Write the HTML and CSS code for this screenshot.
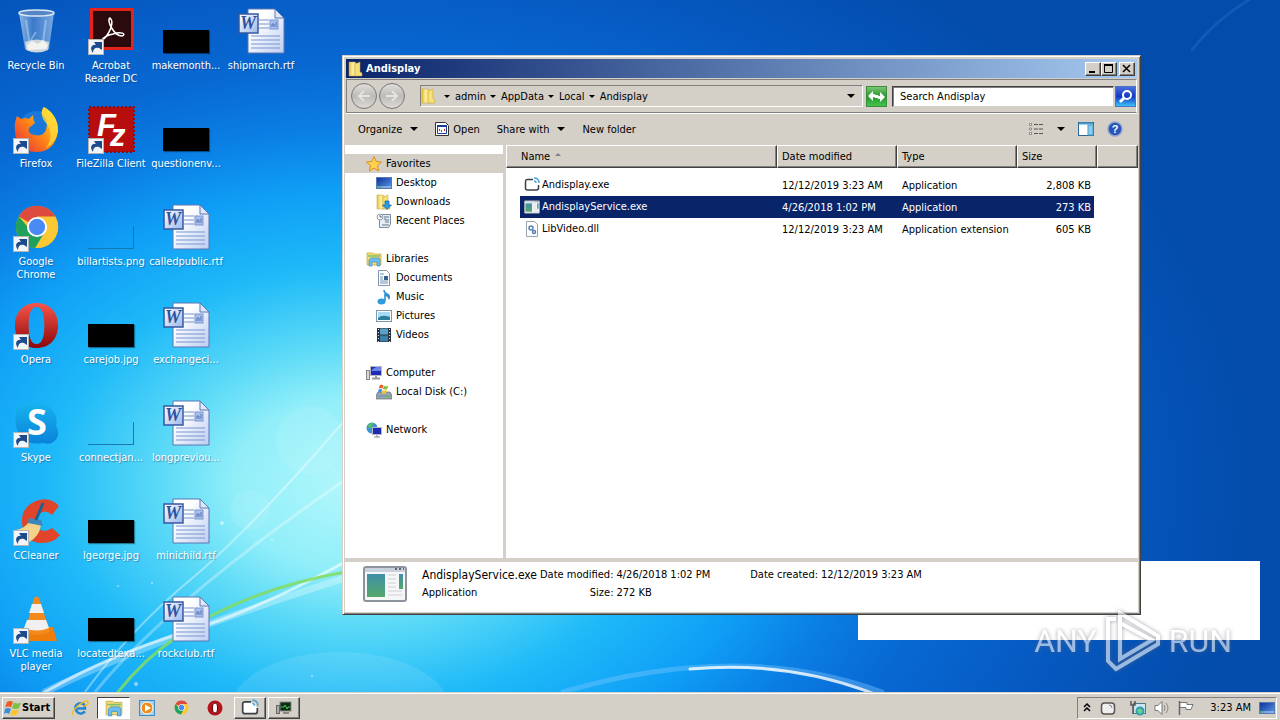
FILE: index.html
```html
<!DOCTYPE html>
<html lang="en">
<head>
    <meta charset="UTF-8">
    <meta name="viewport" content="width=device-width, initial-scale=1.0">
    <title>Andisplay</title>
    <link rel="stylesheet" href="styles.css">
</head>
<body>
    <!-- shared icons -->
    <svg class="sprite" width="0" height="0" aria-hidden="true">
        <defs>
            <linearGradient id="g-red" x1="0" y1="0" x2="0" y2="1">
                <stop offset="0" stop-color="#f7564a"/><stop offset="1" stop-color="#8e0508"/>
            </linearGradient>
            <linearGradient id="g-paper" x1="0" y1="0" x2="1" y2="1">
                <stop offset="0.3" stop-color="#ffffff"/><stop offset="1" stop-color="#bccdf2"/>
            </linearGradient>
            <linearGradient id="g-word" x1="0" y1="0" x2="1" y2="1">
                <stop offset="0" stop-color="#ffffff"/><stop offset="1" stop-color="#9db8ea"/>
            </linearGradient>
            <linearGradient id="g-fox" x1="0" y1="1" x2="1" y2="0">
                <stop offset="0" stop-color="#e8223c"/><stop offset="0.5" stop-color="#ff8a16"/><stop offset="1" stop-color="#fff23a"/>
            </linearGradient>
            <linearGradient id="g-folder" x1="0" y1="0" x2="1" y2="0">
                <stop offset="0" stop-color="#e9c23c"/><stop offset="0.5" stop-color="#fdf3a4"/><stop offset="1" stop-color="#e3c04a"/>
            </linearGradient>
            <linearGradient id="g-screen" x1="0" y1="0" x2="1" y2="1">
                <stop offset="0" stop-color="#0a2f96"/><stop offset="1" stop-color="#5a9ae8"/>
            </linearGradient>
            <linearGradient id="g-green" x1="0" y1="0" x2="0" y2="1">
                <stop offset="0" stop-color="#3f8fa8"/><stop offset="1" stop-color="#54a868"/>
            </linearGradient>
            <linearGradient id="g-glass" x1="0" y1="0" x2="1" y2="0">
                <stop offset="0" stop-color="#b9d4f0"/><stop offset="0.4" stop-color="#4d84cc"/><stop offset="1" stop-color="#9fc3ea"/>
            </linearGradient>
            <linearGradient id="g-skype" x1="0" y1="0" x2="0" y2="1">
                <stop offset="0" stop-color="#17b4f0"/><stop offset="1" stop-color="#0a82d8"/>
            </linearGradient>
        </defs>
        <symbol id="shortcut" viewBox="0 0 16 16">
            <rect x="0.5" y="0.5" width="15" height="15" fill="#f1f4f8" stroke="#b5b5b5"/>
            <path d="M5 14C1 9 4 5 8 6L6 3h8v8l-3-2C7 8 5 10 5 14z" fill="#1c4a8c"/>
        </symbol>
        <symbol id="rtf" viewBox="0 0 48 48">
            <path d="M11 1h27l9 9v35H11z" fill="url(#g-paper)" stroke="#5b76b4"/>
            <path d="M38 1v9h9z" fill="#dfe8fa" stroke="#5b76b4"/>
            <path d="M22 12h10M22 16h10M22 20h10M14 28h29M14 32h29M14 36h29M14 40h29" stroke="#7b95cf"/>
            <rect x="33" y="12" width="8" height="9" fill="#a9c0ea" stroke="#7b95cf"/>
            <path d="M35 19v-3h2v3M39 19v-5" fill="none" stroke="#5272b8"/>
            <rect x="2" y="6" width="19" height="19" fill="url(#g-word)" stroke="#3558a4" stroke-width="1.5"/>
        </symbol>
        <symbol id="chrome" viewBox="0 0 48 48">
            <circle cx="24" cy="24" r="22" fill="#fcc934"/>
            <path d="M24 24L4.900 13A22 22 0 0 1 43.100 13z" fill="#dd4b3e"/>
            <path d="M24 24h-9.500L4.900 13A22 22 0 0 0 22 46l9-15z" fill="#1fa15d"/>
            <path d="M24 13h19.100A22 22 0 0 1 24 46l9.500-17z" fill="#fcc934"/>
            <circle cx="24" cy="24" r="10.500" fill="#fff"/>
            <circle cx="24" cy="24" r="8.500" fill="#4a8af4"/>
        </symbol>
        <symbol id="opera" viewBox="0 0 48 48">
            <path fill="url(#g-red)" fill-rule="evenodd" d="M24 1C37 1 46 10 46 24S37 47 24 47 2 38 2 24 11 1 24 1zM24 5C18 5 16 13 16 24S18 43 24 43 32 35 32 24 30 5 24 5z"/>
        </symbol>
        <symbol id="folder" viewBox="0 0 16 16">
            <path d="M1 1h6l2 2v12H1z" fill="url(#g-folder)" stroke="#c59c2c" stroke-width="0.5"/>
            <path d="M7 3l5-2v10l2 1v3H7z" fill="#f6e07a" stroke="#c59c2c" stroke-width="0.5"/>
        </symbol>
        <symbol id="library" viewBox="0 0 16 16">
            <path d="M1 2h6l1 1h7v11H1z" fill="#f4dc74" stroke="#c8a236" stroke-width="0.7"/>
            <path d="M2 5h12" stroke="#7ec46a" stroke-width="1.500"/>
            <path d="M3 15V9l2-2h8l1 2v6h-3v-4H6v4z" fill="#6dbef0" stroke="#3b8fcc" stroke-width="0.7"/>
        </symbol>
        <symbol id="screen" viewBox="0 0 16 16">
            <rect x="0.5" y="2.500" width="15" height="11" fill="url(#g-screen)" stroke="#5a78b8"/>
            <path d="M1 12h14" stroke="#bcd7f5"/><path d="M1 12h4" stroke="#42b05a"/>
        </symbol>
        <symbol id="castbox" viewBox="0 0 16 16">
            <path d="M9 2.500H3.500a2 2 0 0 0-2 2V11a2 2 0 0 0 2 2h9a2 2 0 0 0 2-2V8" fill="#fff" stroke="#3b3f46" stroke-width="1.500"/>
            <path d="M8 4h5v5" fill="#fff"/>
            <path d="M10 1c3 0 5 2 5 5M10 4c1 0 2 1 2 2" fill="none" stroke="#4ba6dc" stroke-width="1.500"/>
        </symbol>
        <symbol id="appwin" viewBox="0 0 44 36">
            <rect x="1" y="1" width="42" height="34" rx="2" fill="#f5f6f8" stroke="#8d949e" stroke-width="2"/>
            <path d="M2 4h40" stroke="#c9d1dc" stroke-width="4"/>
            <path d="M32 3h2M36 3h2M40 3h1" stroke="#5d6672" stroke-width="2"/>
            <rect x="4" y="8" width="18" height="23" fill="url(#g-green)"/>
            <path d="M25 9h8M25 13h8M25 17h8M25 21h8M25 25h14M25 29h14" stroke="#d0d0d0"/>
            <rect x="36" y="8" width="4" height="15" fill="url(#g-green)"/>
        </symbol>
        <symbol id="start-flag" viewBox="0 0 18 16">
            <path d="M3 2q3-2 6 0L7 7.500q-3-2-6 0z" fill="#ee5a24"/>
            <path d="M10 2.500q3 2 7 0L15 8q-3 2-7 0z" fill="#7cc142"/>
            <path d="M1 9q3-2 6 0l-2 5q-3-2-5 0z" fill="#3a8ee0"/>
            <path d="M8 9.500q3 2 7 0l-2 5q-3 2-7 0z" fill="#fbc52c"/>
        </symbol>
    </svg>

    <main class="desktop">
        <svg class="streaks" viewBox="0 0 1280 692" preserveAspectRatio="none" aria-hidden="true">
            <g fill="none" stroke-linecap="round">
                <path d="M45 692Q150 640 345 578" stroke="#fff" stroke-opacity="0.3" stroke-width="7"/>
                <path d="M45 692Q110 655 185 632T345 562" stroke="#fff" stroke-opacity="0.6" stroke-width="3"/>
                <path d="M85 692Q130 630 190 580T345 420" stroke="#fff" stroke-opacity="0.4" stroke-width="2"/>
                <path d="M95 692Q170 600 345 480" stroke="#fff" stroke-opacity="0.3" stroke-width="3"/>
                <path d="M118 692Q190 600 345 572" stroke="#83dc62" stroke-opacity="0.85" stroke-width="3"/>
                <path d="M563 692Q740 640 882 692" stroke="#7fc8ff" stroke-opacity="0.4" stroke-width="5"/>
                <path d="M690 669Q790 660 880 696" stroke="#fff" stroke-opacity="0.8" stroke-width="3"/>
                <path d="M1192 50Q1215 20 1249 0" stroke="#4f9be0" stroke-opacity="0.2" stroke-width="3"/>
            </g>
            <circle cx="310" cy="440" r="34" fill="#fff" fill-opacity="0.08"/>
            <circle cx="250" cy="510" r="20" fill="#fff" fill-opacity="0.08"/>
            <ellipse cx="340" cy="710" rx="110" ry="58" fill="#fff" fill-opacity="0.1"/>
            <g fill="#fff" fill-opacity="0.5">
                <circle cx="222" cy="523" r="2"/><circle cx="118" cy="586" r="1"/><circle cx="136" cy="684" r="2"/>
                <circle cx="272" cy="540" r="1"/><circle cx="312" cy="676" r="1"/><circle cx="152" cy="583" r="1"/>
            </g>
        </svg>

        <nav class="icons" aria-label="Desktop">
            <a href="#" class="shortcut">
                <svg viewBox="0 0 48 48">
                    <path d="M7 5h35l-5 36q-12 6-24 0z" fill="url(#g-glass)" fill-opacity="0.75"/>
                    <path d="M13 34q11-5 24 0l-1 8q-11 5-22 0z" fill="#ccd5de"/>
                    <path d="M15 37l5-4 6 3 5-4 5 5-2 4-18 1z" fill="#f3f3ef"/>
                    <path d="M14 12l4 26M34 12l-3 22M24 24l-5 8" stroke="#d8ecff" stroke-opacity="0.4" stroke-width="2"/>
                    <ellipse cx="24.500" cy="5" rx="17.500" ry="3" fill="#5586c4" stroke="#dbe7f3" stroke-width="1.500"/>
                </svg>
                <span>Recycle Bin</span>
            </a>
            <a href="#" class="shortcut">
                <svg viewBox="0 0 48 48">
                    <rect x="3" y="0" width="44" height="42" fill="#e5231b"/>
                    <rect x="6" y="3" width="38" height="36" fill="#2a0a0c"/>
                    <path d="M14 33C22 28 28 14 23 10c-4 2 4 18 12 18 5-2-1-5-9-2-6 1-10 4-12 7z" fill="none" stroke="#fff" stroke-width="1.500"/>
                    <use href="#shortcut" x="1" y="31" width="16" height="16"/>
                </svg>
                <span>Acrobat Reader DC</span>
            </a>
            <a href="#" class="shortcut"><i class="thumb dark"></i><span>makemonth...</span></a>
            <a href="#" class="shortcut"><svg><use href="#rtf"/><text x="11" y="21" text-anchor="middle" class="word-w">W</text></svg><span>shipmarch.rtf</span></a>

            <a href="#" class="shortcut">
                <svg viewBox="0 0 48 48">
                    <circle cx="24" cy="22" r="17" fill="#1878dc"/>
                    <path d="M5 10l4 3q4-2 8 0l4-4q0 5 2 8l-6 5q-2 6 6 7 8 2 11-5Q37 13 30 9q-1-5 2-8Q46 9 46 25 43 46 24 46 4 45 3 26 2 16 5 10z" fill="url(#g-fox)"/>
                    <path d="M30 9q-1-5 2-8Q46 9 46 25q-2 12-12 17 9-14 0-25-4-4-4-8z" fill="#ffe03a" fill-opacity="0.7"/>
                    <use href="#shortcut" x="1" y="32" width="16" height="16"/>
                </svg>
                <span>Firefox</span>
            </a>
            <a href="#" class="shortcut">
                <svg viewBox="0 0 48 48">
                    <rect x="2" y="1" width="45" height="45" fill="#b80d0d" stroke="#8a0d12" stroke-width="2" stroke-dasharray="2 2"/>
                    <text x="10" y="30" class="fz">F<tspan dy="10" dx="-6">z</tspan></text>
                    <use href="#shortcut" x="1" y="32" width="16" height="16"/>
                </svg>
                <span>FileZilla Client</span>
            </a>
            <a href="#" class="shortcut"><i class="thumb dark"></i><span>questionenv...</span></a>

            <a href="#" class="shortcut">
                <svg viewBox="0 0 48 48">
                    <use href="#chrome" x="2" y="0" width="46" height="46"/>
                    <use href="#shortcut" x="1" y="32" width="16" height="16"/>
                </svg>
                <span>Google Chrome</span>
            </a>
            <a href="#" class="shortcut"><i class="thumb clear"></i><span>billartists.png</span></a>
            <a href="#" class="shortcut"><svg><use href="#rtf"/><text x="11" y="21" text-anchor="middle" class="word-w">W</text></svg><span>calledpublic.rtf</span></a>

            <a href="#" class="shortcut">
                <svg viewBox="0 0 48 48">
                    <use href="#opera" x="1" y="0" width="47" height="47"/>
                    <use href="#shortcut" x="1" y="32" width="16" height="16"/>
                </svg>
                <span>Opera</span>
            </a>
            <a href="#" class="shortcut"><i class="thumb dark"></i><span>carejob.jpg</span></a>
            <a href="#" class="shortcut"><svg><use href="#rtf"/><text x="11" y="21" text-anchor="middle" class="word-w">W</text></svg><span>exchangeci...</span></a>

            <a href="#" class="shortcut">
                <svg viewBox="0 0 48 48">
                    <path d="M4 13C4 5 10 1 17 2q18-2 25 10 4 7 2 14 4 6 1 12-5 8-14 5Q14 46 7 34 2 26 4 13z" fill="url(#g-skype)"/>
                    <text x="25" y="35" text-anchor="middle" class="skype-s">S</text>
                    <use href="#shortcut" x="1" y="32" width="16" height="16"/>
                </svg>
                <span>Skype</span>
            </a>
            <a href="#" class="shortcut"><i class="thumb clear"></i><span>connectjan...</span></a>
            <a href="#" class="shortcut"><svg><use href="#rtf"/><text x="11" y="21" text-anchor="middle" class="word-w">W</text></svg><span>longpreviou...</span></a>

            <a href="#" class="shortcut">
                <svg viewBox="0 0 48 48">
                    <path d="M47 8Q38-2 24 3 9 9 10 25q2 20 20 20 12 0 18-8l-8-7q-8 6-14 0-5-7 0-13 7-7 14 0z" fill="#e0452c"/>
                    <path d="M4 32q10-2 14-10l11 5q-2 12-12 17z" fill="#f5d28a"/>
                    <path d="M17 20l12 2 2 6-15-3z" fill="#3c86bc"/>
                    <path d="M31 5l-7 17" stroke="#1b6296" stroke-width="3"/>
                    <use href="#shortcut" x="1" y="32" width="16" height="16"/>
                </svg>
                <span>CCleaner</span>
            </a>
            <a href="#" class="shortcut"><i class="thumb dark"></i><span>lgeorge.jpg</span></a>
            <a href="#" class="shortcut"><svg><use href="#rtf"/><text x="11" y="21" text-anchor="middle" class="word-w">W</text></svg><span>minichild.rtf</span></a>

            <a href="#" class="shortcut">
                <svg viewBox="0 0 48 48">
                    <path d="M13 31h28l4 14H9z" fill="#ef7d0c"/>
                    <path d="M22 2q3-3 5 0l11 34q-13 6-25 0z" fill="#f58a1c"/>
                    <path d="M20 8h9l3 9H17zM15 24h19l3 8q-12 5-25 0z" fill="#f0f0f0"/>
                    <use href="#shortcut" x="1" y="32" width="16" height="16"/>
                </svg>
                <span>VLC media player</span>
            </a>
            <a href="#" class="shortcut"><i class="thumb dark"></i><span>locatedtexa...</span></a>
            <a href="#" class="shortcut"><svg><use href="#rtf"/><text x="11" y="21" text-anchor="middle" class="word-w">W</text></svg><span>rockclub.rtf</span></a>
        </nav>

        <div class="popup"></div>

        <section class="window" aria-label="Andisplay">
            <header class="title-bar">
                <svg width="16" height="16"><use href="#folder"/></svg>
                <h1>Andisplay</h1>
                <button type="button" aria-label="Minimize"><svg width="12" height="10"><path d="M2 8h6" stroke="#000" stroke-width="2"/></svg></button>
                <button type="button" aria-label="Maximize"><svg width="12" height="10"><path d="M1.500 1v7.500h8V1M1 1h9" fill="none" stroke="#000"/><path d="M1 1h9" stroke="#000" stroke-width="2"/></svg></button>
                <button type="button" aria-label="Close" class="close"><svg width="12" height="10"><path d="M2 1l7 7M9 1L2 8" stroke="#000" stroke-width="1.500"/></svg></button>
            </header>

            <div class="nav-bar">
                <button type="button" class="round" aria-label="Back"><svg width="16" height="16"><path d="M14 8H3M8 3L3 8l5 5" fill="none" stroke="#e6e4e0" stroke-width="2"/></svg></button>
                <button type="button" class="round" aria-label="Forward"><svg width="16" height="16"><path d="M2 8h11M8 3l5 5-5 5" fill="none" stroke="#e6e4e0" stroke-width="2"/></svg></button>
                <div class="address">
                    <svg width="16" height="16"><use href="#folder"/></svg>
                    <button type="button"><i class="arrow"></i>admin</button>
                    <button type="button"><i class="arrow"></i>AppData</button>
                    <button type="button"><i class="arrow"></i>Local</button>
                    <button type="button"><i class="arrow"></i>Andisplay</button>
                    <button type="button" class="history" aria-label="Previous locations"><i class="arrow big"></i></button>
                </div>
                <button type="button" class="refresh" aria-label="Refresh">
                    <svg width="19" height="19"><path d="M1 9l5-5v3q4 0 4 4H8q0-1-2-1v4zM18 10l-5 5v-3q-4 0-4-4h2q0 1 2 1V5z" fill="#fff"/></svg>
                </button>
                <input type="text" class="search" placeholder="Search Andisplay" aria-label="Search Andisplay">
                <button type="button" class="go" aria-label="Search">
                    <svg width="19" height="19"><circle cx="11" cy="8" r="4" fill="none" stroke="#fff" stroke-width="2"/><path d="M8 11l-4 4" stroke="#fff" stroke-width="3"/></svg>
                </button>
            </div>

            <div class="toolbar">
                <button type="button">Organize <i class="arrow big"></i></button>
                <button type="button" class="open">
                    <svg width="14" height="16"><path d="M0.500 1.500h10l3 3v10H0.500z" fill="#fff" stroke="#333"/><path d="M2 5h10" stroke="#1c3f94" stroke-width="2"/><path d="M2.500 6v6.500h9V6" fill="none" stroke="#1c3f94"/><path d="M4 9h1M6 10h1M9 9h1" stroke="#c22" stroke-width="2"/></svg>
                    Open
                </button>
                <button type="button">Share with <i class="arrow big"></i></button>
                <button type="button">New folder</button>
                <div class="tools">
                    <button type="button" aria-label="Change view" class="view">
                        <svg width="16" height="14"><path d="M1.500 1.500h2v2h-2zM1.500 6h2v2h-2zM1.500 10.500h2v2h-2z" fill="#fff" stroke="#888"/><path d="M6 2.500h4M11 2.500h4M6 7h4M11 7h4M6 11.500h4M11 11.500h4" stroke="#555"/></svg>
                        <i class="arrow big"></i>
                    </button>
                    <button type="button" aria-label="Preview pane">
                        <svg width="16" height="14"><rect x="0.500" y="0.500" width="15" height="13" fill="#fff" stroke="#2b6797"/><path d="M1 1.500h14" stroke="#4a9ccb" stroke-width="2"/><rect x="10" y="3" width="5" height="10" fill="#8bcbe9" stroke="#4a9ccb"/></svg>
                    </button>
                    <button type="button" aria-label="Help">
                        <svg width="16" height="16"><circle cx="8" cy="8" r="7" fill="#2854b8" stroke="#8fa3cc" stroke-width="1.500"/><text x="8" y="12" text-anchor="middle" class="help-q">?</text></svg>
                    </button>
                </div>
            </div>

            <div class="content">
                <nav class="tree" aria-label="Folders">
                    <ul>
                        <li class="current"><a href="#"><svg width="16" height="16"><path d="M8 0.500l2.300 5 5.200.5-4 3.600 1.200 5.400L8 12.200 3.300 15l1.200-5.400-4-3.600 5.200-.5z" fill="#ffd44c" stroke="#e08a1e"/></svg>Favorites</a></li>
                        <li class="sub"><a href="#"><svg width="16" height="16"><use href="#screen"/></svg>Desktop</a></li>
                        <li class="sub"><a href="#"><svg width="16" height="16"><use href="#folder"/><path d="M9 7h4v4h2.500L11 15.500 6.500 11H9z" fill="#2a9ae0" stroke="#0f62a8" stroke-width="0.700"/></svg>Downloads</a></li>
                        <li class="sub"><a href="#"><svg width="16" height="16"><path d="M5.500 1.500h9v10l-2 3h-9v-8z" fill="#e6edf3" stroke="#7d8b98"/><path d="M8 4h5M8 6h2v4M12 6v4M6 12h7" fill="none" stroke="#5c7891"/><circle cx="4" cy="4" r="3" fill="#fff" stroke="#8aa0b2"/><path d="M4 2v2h2" fill="none" stroke="#567"/></svg>Recent Places</a></li>
                    </ul>
                    <ul>
                        <li><a href="#"><svg width="16" height="16"><use href="#library"/></svg>Libraries</a></li>
                        <li class="sub"><a href="#"><svg width="16" height="16"><path d="M2.500 0.500h8l3 3v12h-11z" fill="#fff" stroke="#8094ad"/><path d="M4 4h4M4 7h3M4 9h3M4 11h8M4 13h8" stroke="#6f8fb5"/><rect x="8" y="6" width="4" height="4" fill="#35608f"/></svg>Documents</a></li>
                        <li class="sub"><a href="#"><svg width="16" height="16"><path d="M8 1q0 3 3 4t2 5q0-3-4-4v6" fill="#7cc3ee" stroke="#2c8fcd" stroke-width="1.500"/><ellipse cx="5.500" cy="12.500" rx="4" ry="3" fill="#2c9be0"/></svg>Music</a></li>
                        <li class="sub"><a href="#"><svg width="16" height="16"><rect x="0.500" y="2.500" width="15" height="11" fill="#fff" stroke="#7f98a8"/><rect x="2" y="4" width="12" height="8" fill="#a6dcf2"/><path d="M2 10q4-4 12-1v3H2z" fill="#2b7f9d"/></svg>Pictures</a></li>
                        <li class="sub"><a href="#"><svg width="16" height="16"><rect x="1" y="1" width="14" height="14" fill="#26323f"/><rect x="4" y="1.500" width="8" height="6" fill="#5ea1c6"/><rect x="4" y="8.500" width="8" height="6" fill="#3d80a9"/><path d="M2.500 2v13M13.500 2v13" stroke="#dbe5ec" stroke-dasharray="1 2"/></svg>Videos</a></li>
                    </ul>
                    <ul>
                        <li><a href="#"><svg width="16" height="16"><rect x="0.500" y="5.500" width="3" height="9" fill="#d8d8d8" stroke="#888"/><rect x="4.500" y="1.500" width="11" height="9" fill="#1d2bb4" stroke="#b9b9c4"/><path d="M5 6q4-5 10-4v4z" fill="#6d83ea"/><path d="M10 11v2M6 13.500h8" stroke="#999" stroke-width="2"/></svg>Computer</a></li>
                        <li class="sub"><a href="#"><svg width="16" height="16"><path d="M2 8h12l2 3v4H0v-4z" fill="#9aa4ad" stroke="#69737c" stroke-width="0.700"/><path d="M1 12h14" stroke="#6c8fb0"/><path d="M10 13h4" stroke="#5fcc4c" stroke-width="1.500"/><svg x="2" y="0" width="11" height="10"><use href="#start-flag"/></svg></svg>Local Disk (C:)</a></li>
                    </ul>
                    <ul>
                        <li><a href="#"><svg width="16" height="16"><circle cx="6" cy="6" r="5.500" fill="#3a94d8"/><path d="M2 3q3-3 5-2L6 5 3 7zM6 8l4-2-1 4-2 1z" fill="#5cc05c"/><rect x="6.500" y="5.500" width="9" height="7" fill="#1d2bb4" stroke="#b9b9c4"/><path d="M11 13v2M8 15h6" stroke="#888"/></svg>Network</a></li>
                    </ul>
                </nav>

                <div class="files">
                    <table>
                        <thead>
                            <tr>
                                <th class="col-name" aria-sort="ascending">Name <i class="sort"></i></th>
                                <th class="col-date">Date modified</th>
                                <th class="col-type">Type</th>
                                <th class="col-size">Size</th>
                                <th></th>
                            </tr>
                        </thead>
                        <tbody>
                            <tr>
                                <td><svg width="16" height="16"><use href="#castbox"/></svg>Andisplay.exe</td>
                                <td>12/12/2019 3:23 AM</td>
                                <td>Application</td>
                                <td>2,808 KB</td>
                                <td></td>
                            </tr>
                            <tr class="selected">
                                <td><svg width="16" height="14"><use href="#appwin"/></svg>AndisplayService.exe</td>
                                <td>4/26/2018 1:02 PM</td>
                                <td>Application</td>
                                <td>273 KB</td>
                                <td></td>
                            </tr>
                            <tr>
                                <td><svg width="16" height="16"><path d="M2.500 0.500h8l3 3v12h-11z" fill="#fff" stroke="#9aa3b0"/><circle cx="7" cy="7" r="2" fill="none" stroke="#5580b4" stroke-width="1.500"/><circle cx="10" cy="11" r="1.500" fill="none" stroke="#5580b4" stroke-width="1.500"/></svg>LibVideo.dll</td>
                                <td>12/12/2019 3:23 AM</td>
                                <td>Application extension</td>
                                <td>605 KB</td>
                                <td></td>
                            </tr>
                        </tbody>
                    </table>
                </div>
            </div>

            <footer class="details">
                <svg width="44" height="36"><use href="#appwin"/></svg>
                <div class="file">
                    <strong>AndisplayService.exe</strong>
                    <span>Application</span>
                </div>
                <dl>
                    <dt>Date modified:</dt><dd>4/26/2018 1:02 PM</dd>
                    <dt>Size:</dt><dd>272 KB</dd>
                </dl>
                <dl>
                    <dt>Date created:</dt><dd>12/12/2019 3:23 AM</dd>
                </dl>
            </footer>
        </section>

        <div class="watermark">
            <span>ANY</span>
            <svg width="56" height="62" viewBox="0 0 56 62"><path d="M11 9H3v42l8 8 42-25v-8L15 3v46l32-19-32-17" fill="none" stroke="#fff" stroke-width="4"/></svg>
            <span>RUN</span>
        </div>
    </main>

    <footer class="taskbar">
        <button type="button" class="start"><svg width="18" height="16"><use href="#start-flag"/></svg>Start</button>
        <div class="launch">
            <button type="button" aria-label="Internet Explorer"><svg width="18" height="18"><path d="M14 12.500Q9 17 5.500 12T8 4.500Q14 3 14 9.500H6" fill="none" stroke="#2286d4" stroke-width="2.500"/><path d="M2 16Q0 12 8 6t9-3-4 4" fill="none" stroke="#f1bd2b" stroke-width="1.500"/></svg></button>
            <button type="button" class="pressed" aria-label="Windows Explorer"><svg width="18" height="18"><use href="#library"/></svg></button>
            <button type="button" aria-label="Media Player"><svg width="16" height="16"><rect x="0.500" y="0.500" width="15" height="15" fill="#9ed0f2" stroke="#3f88c0"/><circle cx="8" cy="8" r="6" fill="#f28a1a" stroke="#fff"/><path d="M6 4.500l6 3.500-6 3.500z" fill="#fff"/></svg></button>
            <button type="button" aria-label="Google Chrome"><svg width="15" height="15"><use href="#chrome"/></svg></button>
            <button type="button" aria-label="Opera"><svg width="16" height="16" viewBox="0 0 16 16"><circle cx="8" cy="8" r="7.500" fill="#b8131c"/><ellipse cx="8" cy="8" rx="2.500" ry="5" fill="#fff" stroke="#5b0508"/></svg></button>
            <button type="button" class="raised" aria-label="Andisplay"><svg width="18" height="18"><use href="#castbox"/></svg></button>
            <button type="button" class="raised" aria-label="Monitor"><svg width="18" height="16"><rect x="5" y="2" width="11" height="9" fill="#0d2a14" stroke="#888"/><path d="M6 7h3l1-2 2 4 1-2h2" fill="none" stroke="#3ecf4e"/><rect x="1.500" y="5.500" width="3" height="8" fill="#aaa" stroke="#666"/><path d="M8 13h6" stroke="#888" stroke-width="2"/></svg></button>
        </div>
        <div class="tray">
            <button type="button" aria-label="Show hidden icons"><svg width="8" height="10"><path d="M1 4l3-3 3 3M1 8l3-3 3 3" fill="none" stroke="#000" stroke-width="1.500"/></svg></button>
            <button type="button" class="cast" aria-label="Andisplay"><svg width="16" height="16"><rect x="1.500" y="3" width="13" height="11" rx="3" fill="#eee" stroke="#555" stroke-width="1.500"/><path d="M9 5q3 0 3 3" fill="none" stroke="#888"/></svg></button>
            <button type="button" aria-label="Network"><svg width="16" height="16"><rect x="3.500" y="3.500" width="12" height="10" fill="#cfe8ef" stroke="#4b7c8c"/><circle cx="10" cy="11" r="4.500" fill="#2f9fb3"/><path d="M7 10q3-3 5 0t-3 4" fill="#6fd08a"/><path d="M1 1v4h4V1M3 5v9" fill="none" stroke="#555" stroke-width="1.500"/></svg></button>
            <button type="button" aria-label="Volume"><svg width="16" height="16"><path d="M1 5.500h3l4-4v13l-4-4H1z" fill="#fff" stroke="#777"/><path d="M10 5q2 3 0 6M12 3q4 5 0 10" fill="none" stroke="#888"/></svg></button>
            <button type="button" class="flag" aria-label="Action Center"><svg width="16" height="16"><path d="M1.500 1v14" stroke="#666" stroke-width="1.500"/><path d="M2 2.500h7v2h6l-2 5H8v-2H2z" fill="#fff" stroke="#777"/></svg></button>
            <time>3:23 AM</time>
            <button type="button" aria-label="Show desktop"><svg width="16" height="16"><use href="#screen"/></svg></button>
        </div>
    </footer>
</body>
</html>
```
FILE: styles.css
```css
* {
    box-sizing: border-box;
}

body {
    margin: 0;
    height: 100vh;
    display: flex;
    flex-direction: column;
    overflow: hidden;
    font-family: "DejaVu Sans Condensed", "DejaVu Sans", sans-serif;
    font-size: 11px;
    line-height: 13px;
    color: #000;
}

button {
    font: inherit;
    color: inherit;
    background: none;
    border: 0;
    padding: 0;
    display: flex;
    align-items: center;
    white-space: nowrap;
}

a {
    color: inherit;
    text-decoration: none;
}

ul, dl, dd, h1 {
    margin: 0;
    padding: 0;
    list-style: none;
}

svg {
    display: block;
    flex: none;
}

.sprite {
    position: absolute;
}

/* desktop */
.desktop {
    position: relative;
    flex: 1;
    min-height: 0;
    background: radial-gradient(ellipse 70% 92% at 28% 70%, #b4f8fc 0, #90eef9 14%, #5cdaf7 22%, #1fbaf8 34%, #0f9ff6 46%, #0a7ee4 56%, #0868d2 66%, #0658c0 82%, #034cab 100%);
}

.streaks {
    position: absolute;
    width: 100%;
    height: 100%;
}

.icons {
    position: relative;
    display: grid;
    grid-template-columns: repeat(4, 75px);
    grid-auto-rows: 98px;
}

.shortcut {
    display: flex;
    flex-direction: column;
    align-items: center;
    gap: 3px;
    padding: 8px 3px 0 0;
    color: #fff;
    text-align: center;
    text-shadow: 1px 1px 1px rgba(0, 40, 90, 0.4);
}

/* only the first row has a fourth file */
.shortcut:nth-child(n+5):nth-child(3n+2) {
    grid-column: 1;
}

.shortcut svg {
    width: 48px;
    height: 48px;
}

.thumb {
    width: 46px;
    height: 23px;
    margin: 22px 0 3px;
}

.thumb.dark {
    background: #000;
    box-shadow: 1px 1px 1px rgba(0, 0, 0, 0.4);
}

.thumb.clear {
    border-right: 1px solid #1878b0;
    border-bottom: 1px solid #1878b0;
}

.word-w {
    font: italic bold 18px "Liberation Serif", serif;
    fill: #2c52a0;
    text-shadow: none;
}

.fz {
    font: italic bold 31px "Liberation Sans", sans-serif;
    fill: #fff;
    text-shadow: none;
}

.skype-s {
    font: bold 36px "Open Sans", sans-serif;
    fill: #fff;
    text-shadow: none;
}

.help-q {
    font: bold 11px "Liberation Sans", sans-serif;
    fill: #fff;
}

.popup {
    position: absolute;
    right: 20px;
    bottom: 52px;
    width: 402px;
    height: 79px;
    background: #fff;
}

/* explorer window */
.window {
    position: absolute;
    top: 55px;
    right: 139px;
    bottom: 77px;
    left: 342px;
    display: flex;
    flex-direction: column;
    padding: 2px;
    background: #d4d0c8;
    border: 1px solid;
    border-color: #d4d0c8 #404040 #404040 #d4d0c8;
    box-shadow: inset 1px 1px #fff, inset -1px -1px #808080;
}

.title-bar {
    display: flex;
    align-items: center;
    height: 19px;
    margin: 1px 1px 0;
    padding: 0 2px;
    background: linear-gradient(to right, #0a246a, #a6caf0);
    color: #fff;
}

.title-bar h1 {
    flex: 1;
    margin-left: 2px;
    font-size: 11px;
}

.title-bar button {
    width: 16px;
    height: 14px;
    padding: 0 1px;
}

.title-bar .close {
    margin-left: 2px;
}

.title-bar button,
.start,
.raised {
    background: #d4d0c8;
    border: 1px solid;
    border-color: #fff #404040 #404040 #fff;
    box-shadow: inset -1px -1px #808080;
}

.nav-bar {
    display: flex;
    align-items: center;
    height: 34px;
    margin: 1px 1px 0;
    padding-left: 4px;
    border: 1px solid;
    border-color: #808080 #fff #808080 #808080;
    box-shadow: 0 1px #fff;
}

.round {
    width: 26px;
    height: 26px;
    margin-right: 2px;
    justify-content: center;
    border: 1px solid #77757a;
    border-radius: 50%;
    background: linear-gradient(#e0deda, #bebbb6 50%, #dddbd6);
}

.address {
    flex: 1;
    display: flex;
    align-items: center;
    height: 22px;
    margin-left: 13px;
    border: 1px solid;
    border-color: #808080 #fff #fff #808080;
}

.address svg {
    margin-right: 7px;
}

.address button {
    gap: 5px;
    margin-right: 4px;
}

.address .history {
    margin: 0 7px 0 auto;
}

.arrow {
    width: 0;
    height: 0;
    border: 3px solid transparent;
    border-top-color: #000;
    border-bottom: 0;
}

.arrow.big {
    border-width: 4px 4px 0;
}

.refresh,
.go {
    width: 21px;
    height: 21px;
    border: 1px solid #3c8f3c;
    background: linear-gradient(#7cc474, #1f9a2c 50%, #46c24c);
}

.refresh {
    margin: 0 5px 0 3px;
}

.go {
    margin-left: 1px;
    border-color: #4a74c4;
    background: linear-gradient(#4a6ee0, #1238c0 50%, #3cc0f8);
}

.search {
    width: 222px;
    height: 21px;
    padding: 0 7px;
    font: inherit;
    border: 1px solid;
    border-color: #404040 #d4d0c8 #d4d0c8 #404040;
    box-shadow: inset 1px 1px #808080;
    background: #fff;
}

.search::placeholder {
    color: #000;
    opacity: 1;
}

.toolbar {
    display: flex;
    align-items: center;
    gap: 17px;
    height: 32px;
    padding: 0 15px 0 13px;
}

.toolbar button {
    gap: 8px;
}

.toolbar .open {
    gap: 4px;
}

.tools {
    display: flex;
    align-items: center;
    gap: 13px;
    margin-left: auto;
}

.toolbar .view {
    gap: 13px;
}

.content {
    flex: 1;
    display: flex;
    min-height: 0;
}

.tree {
    width: 158px;
    margin-right: 3px;
    padding-top: 9px;
    background: #fff;
}

.tree ul {
    margin-bottom: 19px;
}

.tree li {
    padding-left: 21px;
}

.tree .sub {
    padding-left: 31px;
}

.tree .current {
    background: #d4d0c8;
}

.tree a {
    display: flex;
    align-items: center;
    gap: 4px;
    height: 19px;
}

.files {
    flex: 1;
    background: #fff;
}

table {
    width: 100%;
    table-layout: fixed;
    border-collapse: separate;
    border-spacing: 0;
}

th {
    height: 23px;
    padding: 0 4px;
    font-weight: normal;
    text-align: left;
    background: #d4d0c8;
    border: 1px solid;
    border-color: #fff #404040 #404040 #fff;
    box-shadow: inset -1px -1px #808080;
}

.col-name {
    width: 271px;
    padding-left: 14px;
}

.col-date,
.col-type {
    width: 120px;
}

.col-size {
    width: 80px;
}

.sort {
    display: inline-block;
    margin: 0 0 4px 2px;
    border: 3px solid transparent;
    border-bottom-color: #808080;
    border-top: 0;
}

tbody::before {
    content: "";
    display: block;
    height: 6px;
}

td {
    height: 22px;
    padding: 0 5px;
    white-space: nowrap;
}

td:first-child {
    padding-left: 18px;
}

td:nth-child(4) {
    padding-right: 6px;
    text-align: right;
}

td svg {
    display: inline-block;
    margin-right: 2px;
    vertical-align: middle;
}

.selected {
    color: #fff;
}

.selected td {
    background: #0a246a;
}

.selected td:first-child {
    background: linear-gradient(to right, #fff 14px, #0a246a 14px);
}

.selected td:nth-child(4) {
    background: linear-gradient(to left, #fff 3px, #0a246a 3px);
}

.selected td:last-child {
    background: none;
}

.details {
    display: flex;
    height: 50px;
    margin-top: 4px;
    padding: 4px 18px;
    background: #fff;
    line-height: 18px;
}

.file {
    width: 118px;
    margin-left: 15px;
}

.file strong,
.file span {
    display: block;
    font-weight: normal;
}

.file strong {
    font-size: 12px;
}

.details dl {
    display: grid;
    grid-template-columns: auto auto;
    grid-auto-rows: 18px;
    column-gap: 3px;
    margin-right: 40px;
}

.details dt {
    text-align: right;
}

.watermark {
    position: absolute;
    right: 48px;
    bottom: 20px;
    display: flex;
    align-items: center;
    gap: 8px;
    font: 32px "Roboto", sans-serif;
    color: #fff;
    opacity: 0.6;
    filter: drop-shadow(0 0 2px #667);
}

/* taskbar */
.taskbar {
    display: flex;
    align-items: center;
    height: 28px;
    padding: 2px 3px 0 2px;
    background: #d4d0c8;
    border-top: 1px solid #d4d0c8;
    box-shadow: inset 0 1px #fff;
}

.start {
    width: 53px;
    height: 22px;
    padding-left: 1px;
    font-weight: bold;
}

.launch {
    display: flex;
    align-items: center;
    margin-left: 8px;
}

.launch button {
    width: 34px;
    height: 22px;
    justify-content: center;
}

.launch .pressed {
    width: 33px;
    background: #fff;
    border: 1px solid;
    border-color: #404040 #fff #fff #404040;
}

.launch .raised {
    width: 32px;
    margin-left: 2px;
}

.tray {
    display: flex;
    align-items: center;
    height: 22px;
    margin-left: auto;
    padding: 0 1px 0 5px;
    gap: 8px;
    border: 1px solid;
    border-color: #808080 #fff #fff #808080;
}

.tray .cast {
    margin: 0 6px 0 1px;
}

.tray .flag {
    margin-right: 8px;
}
```
